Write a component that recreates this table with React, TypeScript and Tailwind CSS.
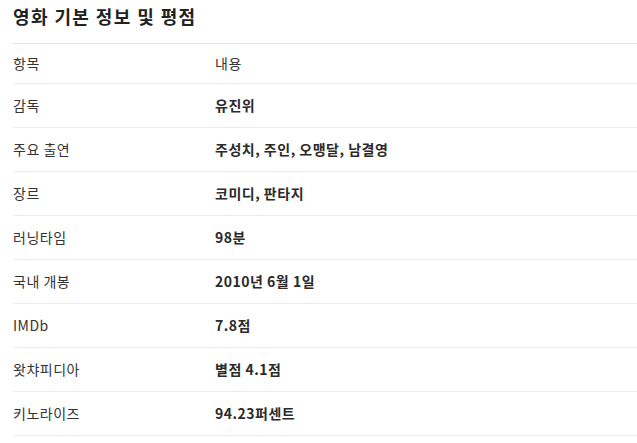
import React from "react";

const rows: [string, string][] = [
  ["감독", "유진위"],
  ["주요 출연", "주성치, 주인, 오맹달, 남결영"],
  ["장르", "코미디, 판타지"],
  ["러닝타임", "98분"],
  ["국내 개봉", "2010년 6월 1일"],
  ["IMDb", "7.8점"],
  ["왓챠피디아", "별점 4.1점"],
  ["키노라이즈", "94.23퍼센트"],
];

export default function App() {
  return (
    <div
      className="w-[637px] h-[443px] bg-white pl-[13px] overflow-hidden"
      style={{ fontFamily: '"Noto Sans CJK KR", "Noto Sans", sans-serif' }}
    >
      <div className="h-[43px] pt-[3px]">
        <h2 className="text-[18px] leading-[27px] font-bold text-[#222] tracking-[1.4px]">영화 기본 정보 및 평점</h2>
      </div>
      <div className="border-t border-[#e3e3e3]">
        <div className="flex h-[40px] items-center border-b border-[#ececec] text-[14px] text-[#333] tracking-[0.5px]">
          <div className="w-[202px]">항목</div>
          <div>내용</div>
        </div>
        {rows.map(([k, v]) => (
          <div key={k} className="flex h-[44px] items-center border-b border-[#ececec] text-[14px] text-[#333] tracking-[0.5px]">
            <div className="w-[202px]">{k}</div>
            <div className="font-semibold text-[#2a2a2a]">{v}</div>
          </div>
        ))}
      </div>
    </div>
  );
}
